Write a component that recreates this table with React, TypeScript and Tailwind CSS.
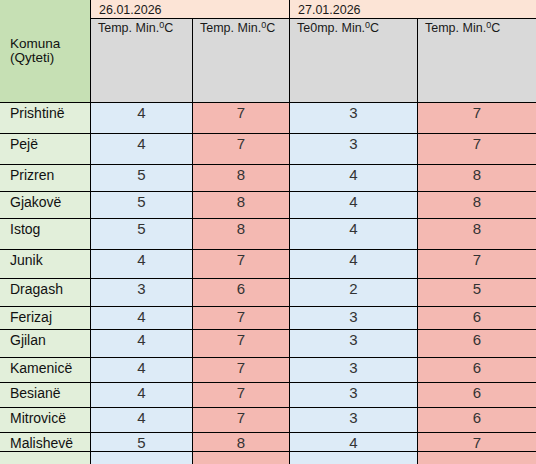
const rows: [string, number, number, number, number][] = [
  ["Prishtinë", 4, 7, 3, 7],
  ["Pejë", 4, 7, 3, 7],
  ["Prizren", 5, 8, 4, 8],
  ["Gjakovë", 5, 8, 4, 8],
  ["Istog", 5, 8, 4, 8],
  ["Junik", 4, 7, 4, 7],
  ["Dragash", 3, 6, 2, 5],
  ["Ferizaj", 4, 7, 3, 6],
  ["Gjilan", 4, 7, 3, 6],
  ["Kamenicë", 4, 7, 3, 6],
  ["Besianë", 4, 7, 3, 6],
  ["Mitrovicë", 4, 7, 3, 6],
  ["Malishevë", 5, 8, 4, 7],
];

const narrow = "font-['Liberation_Sans_Narrow','Liberation_Sans',Arial,sans-serif]";

function HeadLabel({ text }: { text: string }) {
  return (
    <div className="bg-[#d9d9d9] pl-[7px] text-[12.5px] leading-[13px] text-[#1a1a1a]">
      {text}
      <span className="text-[9px] align-[4px]">0</span>C
    </div>
  );
}

function Num({ v, red }: { v: number; red?: boolean }) {
  return (
    <div
      className={`${red ? "bg-[#f4b9b2]" : "bg-[#ddebf7]"} pt-[2px] text-center text-[15px] leading-[16px] text-[#333333] ${narrow}`}
    >
      {v}
    </div>
  );
}

export default function App() {
  return (
    <div className="w-[536px] h-[464px] overflow-hidden bg-white font-['Liberation_Sans',Arial,sans-serif]">
      <div className="grid grid-cols-[90px_101px_96px_127px_1fr] grid-rows-[18px_83px_30px_30px_26px_26px_30px_28px_27px_22px_27px_24px_24px_24px_18px_20px] gap-px bg-black">
        <div className={`row-span-2 flex items-center bg-[#c6e0b4] pl-[10px] text-[13.5px] leading-[14px] text-[#111] ${narrow}`}>
          Komuna
          <br />
          (Qyteti)
        </div>
        <div className="col-span-2 bg-[#fce4d6] pl-[8px] pt-[2px] text-[12.5px] leading-[16px] text-[#1a1a1a]">
          26.01.2026
        </div>
        <div className="col-span-2 bg-[#fce4d6] pl-[8px] pt-[2px] text-[12.5px] leading-[16px] text-[#1a1a1a]">
          27.01.2026
        </div>
        <HeadLabel text="Temp. Min." />
        <HeadLabel text="Temp. Min." />
        <HeadLabel text="Te0mp. Min." />
        <HeadLabel text="Temp. Min." />

        {rows.map(([name, a, b, c, d]) => (
          <div key={name} className="contents">
            <div className={`bg-[#e2efda] pl-[10px] pt-[2px] text-[14px] leading-[16px] text-[#111] ${narrow}`}>
              {name}
            </div>
            <Num v={a} />
            <Num v={b} red />
            <Num v={c} />
            <Num v={d} red />
          </div>
        ))}

        <div className="bg-[#e2efda]" />
        <div className="bg-[#ddebf7]" />
        <div className="bg-[#f4b9b2]" />
        <div className="bg-[#ddebf7]" />
        <div className="bg-[#f4b9b2]" />
      </div>
    </div>
  );
}
